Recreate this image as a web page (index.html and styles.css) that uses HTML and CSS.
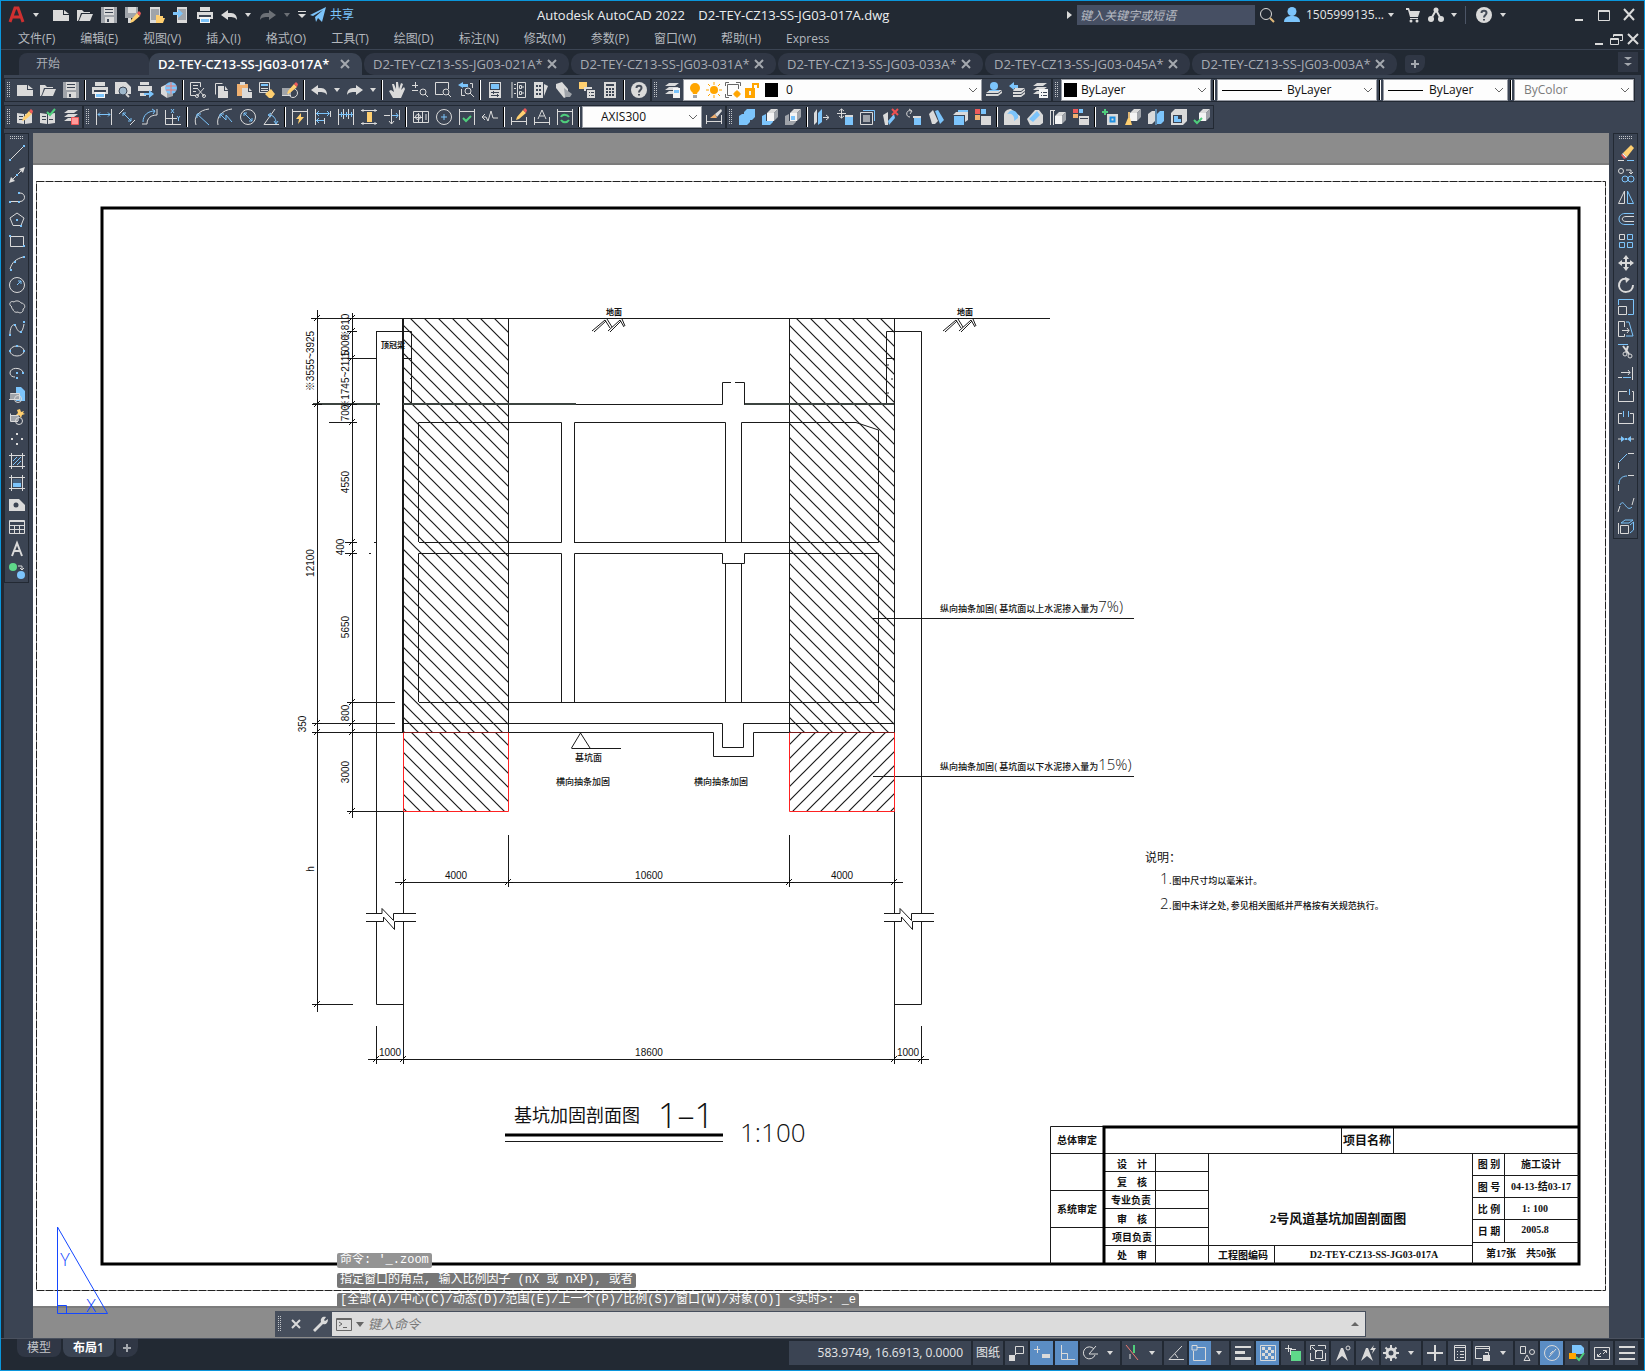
FILE: index.html
```html
<!DOCTYPE html>
<html lang="zh-CN">
<head>
<meta charset="utf-8">
<title>Autodesk AutoCAD 2022 - D2-TEY-CZ13-SS-JG03-017A.dwg</title>
<link rel="stylesheet" href="styles.css">
</head>
<body>
<svg class="sprite" aria-hidden="true">
  <symbol id="new"><path class="f" d="M0 3H10L10 8H16V14H0Z"/><path class="f" d="M11 3L16 7H11Z"/></symbol>
  <symbol id="open"><path class="f" d="M0 3H5L7 5H13V6H4L2 12L1 14H0Z"/><path class="f" d="M5 7H16L13 14H2Z"/></symbol>
  <symbol id="save"><path class="d" d="M0 0H16V16H0Z"/><path class="f" d="M3 0H13V8H3ZM4 10H13V16H4Z"/><path class="k" d="M4 2H12V3H4ZM4 5H12V6H4ZM6 12H8V15H6Z"/></symbol>
  <symbol id="print"><path class="f" d="M3 0H13V4H3ZM0 5H16V12H0Z"/><path class="k" d="M2 8H14V10H2Z"/><path class="w" d="M3 10H13V16H3Z"/><path class="bf" d="M4 12H12V15H4Z"/></symbol>
  <symbol id="undo"><path class="f" d="M0 8L7 3V6H10C14 6 16 9 16 13C14 10 12 10 7 10V13Z"/></symbol>
  <symbol id="redo"><path class="f" d="M16 8L9 3V6H6C2 6 0 9 0 13C2 10 4 10 9 10V13Z"/></symbol>
  <symbol id="caret"><path class="f" d="M5 6H11L8 10Z"/></symbol>
  <symbol id="help"><circle class="f" cx="8" cy="8" r="8"/><path class="q" d="M5.500 6C5.500 3 10.500 3 10.500 6C10.500 8 8 8 8 10.500M8 12V13.500"/></symbol>
  <symbol id="close"><path class="x" d="M4 4L12 12M12 4L4 12"/></symbol>
  <symbol id="chev"><path class="c" d="M4 6L8 10L12 6"/></symbol>
  <symbol id="pencil"><path class="y" d="M6 9L12 2L15 5L8 11L5 12Z"/><path class="rf" d="M12 2L14 0L16 2L15 5Z"/></symbol>
  <symbol id="layers"><path class="f" d="M5 1H15L11 4H1ZM5 5H15L11 8H1ZM5 9H10V12H1Z"/></symbol>
  <symbol id="cube"><path class="f" d="M5 4L9 0H16L12 4Z"/><path class="w" d="M5 4H12V12H5Z"/><path class="d" d="M12 4L16 0V8L12 12Z"/></symbol>
</svg>

<header>
  <div class="titlebar">
    <div class="quick">
      <button class="logo" aria-label="应用程序菜单"><svg class="ic big"><path class="logo-a" d="M3 17L8 3H11L16 17M6 12H13"/></svg></button>
      <button class="mini" aria-label="展开菜单"><svg class="ic"><use href="#caret"/></svg></button>
      <button aria-label="新建"><svg class="ic"><use href="#new"/></svg></button>
      <button aria-label="打开"><svg class="ic"><use href="#open"/></svg></button>
      <button aria-label="保存"><svg class="ic"><use href="#save"/></svg></button>
      <button aria-label="另存为"><svg class="ic"><path class="d" d="M0 0H13V11H0Z"/><path class="f" d="M3 0H11V6H3ZM3 11H6V16H3Z"/><use href="#pencil" y="4"/></svg></button>
      <button aria-label="从 Web 打开"><svg class="ic"><path class="f" d="M1 0H11V16H1Z"/><path class="d" d="M2 2H10V13H2Z"/><path class="y" d="M7 8H10L11 9H14V11H16L14 16H7Z"/></svg></button>
      <button aria-label="保存到 Web"><svg class="ic"><path class="f" d="M4 0H14V16H4Z"/><path class="d" d="M5 2H13V13H5Z"/><path class="bf" d="M0 5H5V2L10 6.500L5 11V8H0Z"/></svg></button>
      <button aria-label="打印"><svg class="ic"><use href="#print"/></svg></button>
      <button aria-label="放弃"><svg class="ic"><use href="#undo"/></svg></button>
      <button class="mini" aria-label="放弃列表"><svg class="ic"><use href="#caret"/></svg></button>
      <button class="off" aria-label="重做"><svg class="ic"><use href="#redo"/></svg></button>
      <button class="mini off" aria-label="重做列表"><svg class="ic"><use href="#caret"/></svg></button>
      <button class="mini" aria-label="自定义快速访问"><svg class="ic"><path d="M4 4.500H12"/><path class="f" d="M4 7H12L8 11Z"/></svg></button>
      <button class="share"><svg class="ic"><path class="bf" d="M0 8L16 0L12 15L8 11L6 15L5 10L13 3L3 9Z"/></svg>共享</button>
    </div>
    <h1>Autodesk AutoCAD 2022 <span>D2-TEY-CZ13-SS-JG03-017A.dwg</span></h1>
    <div class="account">
      <svg class="ic tri"><path class="f" d="M6 4L11 8L6 12Z"/></svg>
      <input type="text" aria-label="搜索" placeholder="键入关键字或短语">
      <button aria-label="搜索"><svg class="ic"><circle cx="7" cy="7" r="5.500"/><path class="ys" d="M11 11L15 15"/></svg></button>
      <button class="user"><svg class="ic"><circle class="bf" cx="8" cy="4.500" r="4.500"/><path class="bf" d="M0 15C0 10 4 9 8 9S16 10 16 15Z"/></svg>1505999135...</button>
      <button class="mini" aria-label="帐户"><svg class="ic"><use href="#caret"/></svg></button>
      <button class="cart" aria-label="商店"><svg class="ic"><path class="f" d="M1 1H4L5 4H15L13 10H5L3 3H1ZM5 11H13V12H5Z"/><circle class="f" cx="6" cy="14" r="1.500"/><circle class="f" cx="12" cy="14" r="1.500"/></svg></button>
      <button class="app" aria-label="Autodesk App"><svg class="ic"><path class="thick" d="M3 12L8 3L13 12"/><path d="M3 12H6M10 12H13"/><circle class="f" cx="8" cy="3" r="2.500"/><circle class="f" cx="3" cy="12" r="3"/><circle class="f" cx="13" cy="12" r="3"/></svg></button>
      <button class="mini" aria-label="App 列表"><svg class="ic"><use href="#caret"/></svg></button>
      <i class="bar"></i>
      <button class="helpb" aria-label="帮助"><svg class="ic"><use href="#help"/></svg></button>
      <button class="mini" aria-label="帮助列表"><svg class="ic"><use href="#caret"/></svg></button>
    </div>
    <div class="win">
      <button aria-label="最小化"><svg class="ic"><path class="f" d="M4 12H12V14H4Z"/></svg></button>
      <button aria-label="最大化"><svg class="ic"><path d="M2.500 3.500H13.500V13.500H2.500ZM2.500 4.500H13.500"/></svg></button>
      <button aria-label="关闭"><svg class="ic"><path class="thick" d="M3 2L13 13M13 2L3 13"/></svg></button>
    </div>
  </div>
  <div class="menurow">
    <nav class="menus" aria-label="菜单栏">
      <a href="#">文件(F)</a><a href="#">编辑(E)</a><a href="#">视图(V)</a><a href="#">插入(I)</a><a href="#">格式(O)</a><a href="#">工具(T)</a><a href="#">绘图(D)</a><a href="#">标注(N)</a><a href="#">修改(M)</a><a href="#">参数(P)</a><a href="#">窗口(W)</a><a href="#">帮助(H)</a><a href="#">Express</a>
    </nav>
    <div class="docwin">
      <button aria-label="最小化文档"><svg class="ic"><path class="f" d="M4 12H12V14H4Z"/></svg></button>
      <button aria-label="还原文档"><svg class="ic"><path d="M5.500 6V3.500H14.500V9.500H12M5.500 4.500H14.500M2.500 7.500H10.500V13.500H2.500ZM2.500 8.500H10.500"/></svg></button>
      <button aria-label="关闭文档"><svg class="ic"><path class="thick" d="M3 3L13 13M13 3L3 13"/></svg></button>
    </div>
  </div>
</header>

<nav class="filetabs" aria-label="文件选项卡">
  <a class="start" href="#">开始</a>
  <a class="on" href="#">D2-TEY-CZ13-SS-JG03-017A*<svg class="ic"><use href="#close"/></svg></a>
  <a href="#">D2-TEY-CZ13-SS-JG03-021A*<svg class="ic"><use href="#close"/></svg></a>
  <a href="#">D2-TEY-CZ13-SS-JG03-031A*<svg class="ic"><use href="#close"/></svg></a>
  <a href="#">D2-TEY-CZ13-SS-JG03-033A*<svg class="ic"><use href="#close"/></svg></a>
  <a href="#">D2-TEY-CZ13-SS-JG03-045A*<svg class="ic"><use href="#close"/></svg></a>
  <a href="#">D2-TEY-CZ13-SS-JG03-003A*<svg class="ic"><use href="#close"/></svg></a>
  <button class="plus" aria-label="新图形"><svg class="ic"><path class="x" d="M4 8H12M8 4V12"/></svg></button>
  <button class="more" aria-label="选项卡列表"><svg class="ic"><path class="x1" d="M4 3H12L8 6ZM4 9H12L8 12Z"/></svg></button>
</nav>

<div class="work">
  <div class="toolbars">
    <div class="row">
      <div class="box"><i class="grip"></i>
        <button aria-label="新建"><svg class="ic"><use href="#new"/></svg></button>
        <button aria-label="打开"><svg class="ic"><use href="#open"/></svg></button>
        <button aria-label="保存"><svg class="ic"><use href="#save"/></svg></button>
        <i class="sep"></i>
        <button aria-label="打印"><svg class="ic"><use href="#print"/></svg></button>
        <button aria-label="打印预览"><svg class="ic"><path class="f" d="M0 0H11L16 5V12H0Z"/><circle class="kb" cx="8" cy="9" r="4"/><path class="thick" d="M11 12L14 15"/></svg></button>
        <button aria-label="发布"><svg class="ic"><path class="f" d="M2 0H11V3H2ZM0 4H14V9H0ZM2 11H8V14H2Z"/><path class="bf" d="M6 11H11V8L16 12L11 16V13H6Z"/></svg></button>
        <button aria-label="三维打印"><svg class="ic"><path class="f" d="M0 5L6 2V16L0 12Z"/><path class="d" d="M6 6L12 11L12 14L6 16Z"/><circle class="bf" cx="10" cy="6" r="6"/><path class="rs" d="M5 4H15M5 8H15M10 0V12"/></svg></button>
        <i class="sep"></i>
        <button aria-label="剪切"><svg class="ic"><path d="M10.500 5V0.500H0.500V13.500H6M3 3.500H8M3 6.500H8M3 9.500H6M7 6L14 14M14 6L7 14"/><circle cx="7" cy="14" r="1.500"/><circle cx="14" cy="14" r="1.500"/></svg></button>
        <button aria-label="复制"><svg class="ic"><path d="M2.500 12.500V1.500H9.500"/><path class="f" d="M5 4H11V9H15V16H5ZM12 4L15 8H12Z"/></svg></button>
        <button aria-label="粘贴"><svg class="ic"><path class="o" d="M1 2H12V14H1Z"/><path class="f" d="M4 0H9V3H4ZM6 6H12V10H16V16H6ZM13 6L16 9H13Z"/></svg></button>
        <button aria-label="特性匹配"><svg class="ic"><path d="M0.500 0.500H10.500V10.500H0.500Z"/><path class="bf" d="M2 2H9V4H2Z"/><path d="M2 6.500H9M2 8.500H9"/><path class="y" d="M6 12L12 7L16 12L13 16H10Z"/></svg></button>
        <button aria-label="块编辑器"><svg class="ic"><path class="d" d="M0 6H9V13H0Z"/><circle cx="11" cy="11" r="4.500"/><path d="M0 13.500H9"/><use href="#pencil"/></svg></button>
        <i class="sep"></i>
        <button aria-label="放弃"><svg class="ic"><use href="#undo"/></svg></button>
        <button class="mini" aria-label="放弃列表"><svg class="ic"><use href="#caret"/></svg></button>
        <button aria-label="重做"><svg class="ic"><use href="#redo"/></svg></button>
        <button class="mini" aria-label="重做列表"><svg class="ic"><use href="#caret"/></svg></button>
        <i class="sep"></i>
        <button aria-label="实时平移"><svg class="ic"><path class="f" d="M4 16L0 9L2 8L5 10L3 2L5 2L7 7L7 0H9L10 7L12 1L14 2L12 8L15 5L16 7L12 16Z"/></svg></button>
        <button aria-label="实时缩放"><svg class="ic"><path d="M0 3.500H6M3.500 0V6M0 8.500H6"/><circle cx="11" cy="10" r="3"/><path d="M13 12L16 15"/></svg></button>
        <button aria-label="窗口缩放"><svg class="ic"><path d="M8 12.500H0.500V0.500H13.500V7"/><circle cx="11" cy="10" r="3"/><path d="M13 12L16 15"/></svg></button>
        <button aria-label="缩放上一个"><svg class="ic"><path class="bf" d="M0 3L5 0V2H10V5H5V6Z"/><path d="M12 1.500H14.500V6M3.500 7V13.500H7"/><circle cx="10" cy="9" r="3"/><path d="M12 11L16 15"/></svg></button>
        <i class="sep"></i>
        <button aria-label="特性"><svg class="ic"><path class="f" d="M2 0H14V16H2Z"/><path class="k" d="M3 1H13V8H3Z"/><path class="bf" d="M4 2H12V7H4Z"/><path class="ks" d="M4 10.500H12M4 13.500H12M6.500 9V12M10.500 12V15"/></svg></button>
        <button aria-label="设计中心"><svg class="ic"><path d="M2 0V16M4 2.500H6M4 6.500H6M4 11.500H6M7.500 0.500H15.500V15.500H7.500ZM9.500 3.500H11.500V6.500H9.500ZM13 4V6M9.500 9.500H11.500V12.500H9.500ZM13 10V12"/></svg></button>
        <button aria-label="工具选项板"><svg class="ic"><path class="f" d="M1 0H10V16H1Z"/><path class="k" d="M3 3H5V5H3ZM6 3H8V5H6ZM3 7H5V9H3ZM6 7H8V9H6ZM3 11H5V13H3ZM6 11H8V13H6Z"/><path class="f" d="M11 2L15 4L11 14Z"/></svg></button>
        <button aria-label="图纸集"><svg class="ic"><path class="f" d="M0 2L6 0L12 7V14L8 16L0 6Z"/><path class="d" d="M8 6L16 12L14 15L9 15Z"/></svg></button>
        <button aria-label="标记集"><svg class="ic"><path class="y" d="M0 0H8V7H0Z"/><path class="f" d="M5 5H13V7H7V9H5ZM8 8H16V16H8Z"/><path class="k" d="M10 10H11V11H10ZM12 10H15V11H12ZM10 13H11V14H10ZM12 13H15V14H12Z"/></svg></button>
        <button aria-label="计算器"><svg class="ic"><path class="f" d="M2 0H14V16H2Z"/><path class="k" d="M4 2H12V4H4ZM4 6H6V8H4ZM7 6H9V8H7ZM10 6H12V8H10ZM4 9H6V11H4ZM7 9H9V11H7ZM10 9H12V11H10ZM4 12H6V14H4ZM7 12H9V14H7ZM10 12H12V14H10Z"/></svg></button>
        <i class="sep"></i>
        <button aria-label="帮助"><svg class="ic"><use href="#help"/></svg></button>
      </div>
      <div class="box"><i class="grip"></i>
        <button aria-label="图层特性管理器"><svg class="ic"><use href="#layers"/><path class="w" d="M9 6H16V16H9Z"/><path class="bf" d="M10 8H15V11H10Z"/></svg></button>
        <div class="combo layer">
          <svg class="ic"><circle class="a" cx="8" cy="6" r="5"/><path class="a" d="M5 9H11L10 12H6Z"/><path class="d" d="M6 13H10V16H6Z"/></svg>
          <svg class="ic"><circle class="a" cx="8" cy="8" r="4"/><path class="as" d="M8 0V3M8 13V16M0 8H3M13 8H16M2 2L4 4M12 12L14 14M14 2L12 4M2 14L4 12"/></svg>
          <svg class="ic"><path class="c" d="M13.500 7V2.500H2.500V13.500H7M0.500 4V0.500H4M11 0.500H15.500V4M0.500 12V15.500H4"/><circle class="a" cx="12" cy="12" r="3"/><path class="as" d="M12 8V16M8 12H16"/></svg>
          <svg class="ic"><path class="a" d="M1 6H11V16H1Z"/><path class="lock" d="M9 6V2H14V6"/><path class="w" d="M5 9H7V13H5Z"/></svg>
          <i class="swatch"></i>
          <select aria-label="图层"><option>0</option></select><svg class="ic"><use href="#chev"/></svg>
        </div>
        <button aria-label="置为当前"><svg class="ic"><path class="f" d="M4 8H16L12 11H0ZM0 12H12L16 9V11L12 14H0Z"/><circle class="bf" cx="8" cy="4" r="4"/><path class="bf" d="M3 8H13V9H3Z"/></svg></button>
        <button aria-label="上一个图层"><svg class="ic"><path class="f" d="M6 6H16L12 9H4ZM4 10H12L16 7V9L12 12H4ZM4 13H12L16 10V12L12 15H4Z"/><path class="bf" d="M0 4L5 0V3H9V6H5V8Z"/></svg></button>
        <button aria-label="图层状态"><svg class="ic"><use href="#layers"/><path class="w" d="M7 7H16V16H7Z"/><path class="k" d="M9 10H10V11H9ZM11 10H15V11H11ZM9 13H10V14H9ZM11 13H15V14H11Z"/></svg></button>
      </div>
      <div class="box props"><i class="grip"></i>
        <div class="combo color"><i class="swatch"></i><select aria-label="颜色"><option>ByLayer</option></select><svg class="ic"><use href="#chev"/></svg></div>
        <i class="sep"></i>
        <div class="combo ltype"><i class="line"></i><select aria-label="线型"><option>ByLayer</option></select><svg class="ic"><use href="#chev"/></svg></div>
        <i class="sep"></i>
        <div class="combo lweight"><i class="line short"></i><select aria-label="线宽"><option>ByLayer</option></select><svg class="ic"><use href="#chev"/></svg></div>
        <i class="sep"></i>
        <div class="combo pstyle"><select aria-label="打印样式" disabled><option>ByColor</option></select><svg class="ic"><use href="#chev"/></svg></div>
      </div>
    </div>
    <div class="row">
      <div class="box"><i class="grip"></i>
        <button aria-label="块编辑"><svg class="ic"><path class="f" d="M0 4L7 5V15L0 14ZM8 5L15 4V14L8 15Z"/><path class="k" d="M2 7H6V8H2ZM2 10H6V11H2Z"/><use href="#pencil"/></svg></button>
        <button aria-label="块保存"><svg class="ic"><path class="f" d="M0 4L7 5V15L0 14ZM8 5L15 4V14L8 15Z"/><path class="k" d="M2 7H6V8H2ZM2 10H6V11H2ZM9 10H13V11H9Z"/><path class="gs" d="M7 3L10 6L15 0"/></svg></button>
        <button aria-label="图层删除"><svg class="ic"><use href="#layers"/><path class="pink" d="M8.500 8.500H15.500V15.500H8.500Z"/></svg></button>
      </div>
      <div class="box"><i class="grip"></i>
        <button aria-label="线性"><svg class="ic"><path d="M0.500 0V16M15.500 0V16"/><path class="b" d="M2 5.500H14M4 3.500L2 5.500L4 7.500M12 3.500L14 5.500L12 7.500"/></svg></button>
        <button aria-label="对齐"><svg class="ic"><path d="M0 5L5 0M11 16L16 11"/><path class="b" d="M4 4L12 12M4 7V4H7M12 9V12H9"/></svg></button>
        <button aria-label="弧长"><svg class="ic"><path d="M5 15C5 9 9 6 15 6M0 15H5M15 0V6"/><path class="b" d="M1 13C1 6 6 2 13 2M10 0L13 2L11 5"/></svg></button>
        <button aria-label="坐标"><svg class="ic"><path d="M0.500 1V15.500H16M0 9.500H12M7.500 5V16"/><path class="b" d="M6 0L9 4M9 0L6 4M12 7L13.500 9L15 7M13.500 9V12"/></svg></button>
        <i class="sep"></i>
        <button aria-label="半径"><svg class="ic"><path d="M2 16C-1 8 5 1 15 0"/><path class="b" d="M3 5L15 16M3 9V5H7"/></svg></button>
        <button aria-label="折弯"><svg class="ic"><path d="M1 16C-1 8 5 1 15 0"/><path class="b" d="M3 5L9 11L9 6L15 13M3 9V5H7"/></svg></button>
        <button aria-label="直径"><svg class="ic"><circle cx="8" cy="8" r="7.500"/><path class="b" d="M4 4L12 12M4 7V4H7M12 9V12H9"/></svg></button>
        <button aria-label="角度"><svg class="ic"><path d="M12 0L1 15.500H16"/><path class="b" d="M6 6C10 6 13 9 13 14M11 12L13 15L15 12M8 4L5 6L8 8"/></svg></button>
        <i class="sep"></i>
        <button aria-label="快速标注"><svg class="ic"><path d="M0.500 0V16M15.500 0V16M1 2.500H15"/><path class="y" d="M9 4L4 10H7L6 15L12 8H9Z"/></svg></button>
        <button aria-label="基线"><svg class="ic"><path d="M0.500 0V16M9.500 9V15M15.500 2V8"/><path class="b" d="M1 4.500H14M1 11.500H9M4 2L1.500 4.500L4 7M4 9L1.500 11.500L4 14M12 2L14.500 4.500L12 7"/></svg></button>
        <button aria-label="连续"><svg class="ic"><path d="M0.500 0V16M5.500 0V10M10.500 0V10M15.500 0V16"/><path class="b" d="M1 5.500H15M3.500 3V8M8.500 3V8M13.500 3V8"/></svg></button>
        <button aria-label="标注间距"><svg class="ic"><path d="M0 1.500H16M0 14.500H16M2 0V3M14 0V3M2 13V16M14 13V16"/><path class="y" d="M6 3H11V13H6Z"/></svg></button>
        <button aria-label="标注打断"><svg class="ic"><path d="M0 6.500H6M7.500 0V15M15.500 1V11M5 12L7.500 15L10 12"/><path class="b" d="M8 6.500H14M12 4L14 6.500L12 9"/></svg></button>
        <i class="sep"></i>
        <button aria-label="公差"><svg class="ic"><path d="M0.500 2.500H15.500V13.500H0.500ZM9.500 3V13M1 8.500H9M5.500 4V13M13 5V11"/><circle cx="5" cy="8" r="2.500"/></svg></button>
        <button aria-label="圆心标记"><svg class="ic"><circle cx="8" cy="8" r="7.500"/><path class="b" d="M5 8H11M8 5V11"/></svg></button>
        <button aria-label="检验"><svg class="ic"><path d="M0.500 0V16M15.500 0V16M1 2.500H15"/><path class="gs" d="M4 9L7 12L12 7"/></svg></button>
        <button aria-label="折弯线性"><svg class="ic"><path d="M0 8H4L6 12L9 2L11 9H16M3 5L0 8L3 11"/></svg></button>
        <i class="sep"></i>
        <button aria-label="编辑标注"><svg class="ic"><path d="M0.500 8V16M15.500 8V16M1 12.500H15"/><use href="#pencil" y="-1"/></svg></button>
        <button aria-label="编辑标注文字"><svg class="ic"><path d="M0.500 8V16M15.500 8V16M1 13.500H15M4 10L8 1L12 10M6 7H10"/></svg></button>
        <button aria-label="标注更新"><svg class="ic"><path d="M0.500 0V16M15.500 0V16M1 2.500H15"/><path class="gs" d="M4 8C5 5 10 5 12 8M12 11C10 14 6 14 4 11"/></svg></button>
        <i class="sep"></i>
        <div class="combo dimstyle"><select aria-label="标注样式"><option>AXIS300</option></select><svg class="ic"><use href="#chev"/></svg></div>
        <button aria-label="标注样式管理"><svg class="ic"><path d="M0.500 6V15M15.500 6V15M1 12.500H15"/><path class="o" d="M4 9L9 5L11 9Z"/><path class="f" d="M9 5L15 0L16 2L11 8Z"/></svg></button>
      </div>
      <div class="box"><i class="grip"></i>
        <button aria-label="并集"><svg class="ic"><path class="bf" d="M0 7L3 5H5V3L8 0H16V8L13 11H11V13L8 16H0Z"/></svg></button>
        <button aria-label="差集"><svg class="ic"><path class="bf" d="M0 7L4 5V12H11V13L8 16H0Z"/><use href="#cube"/></svg></button>
        <button aria-label="交集"><svg class="ic"><path class="d" d="M0 7L4 5V12H11V13L8 16H0Z"/><use href="#cube"/><path class="bf" d="M6 7H10V11H6Z"/></svg></button>
        <i class="sep"></i>
        <button aria-label="拉伸面"><svg class="ic"><path class="f" d="M0 4L3 0V13L0 16Z"/><path class="bf" d="M4 4L8 0V13L4 16Z"/><path d="M9 8.500H15M12 6L15 8.500L12 11"/></svg></button>
        <button aria-label="移动面"><svg class="ic"><path d="M0 4.500H9M4.500 0V9M2 2L4.500 0L7 2M2 7L4.500 9L7 7"/><path class="bf" d="M8 8H16V16H8Z"/><path class="f" d="M8 6H16V8H8Z"/></svg></button>
        <button aria-label="偏移面"><svg class="ic"><path d="M0.500 3.500H12.500V15.500H0.500Z"/><path class="d" d="M3 6H10V13H3Z"/><path class="b" d="M3 1.500H14.500V12"/></svg></button>
        <button aria-label="删除面"><svg class="ic"><path class="f" d="M0 6L5 3V16H2Z"/><path class="bf" d="M5 12L11 5L12 9L6 16Z"/><path class="rs2" d="M9 0L15 6M15 0L9 6"/></svg></button>
        <button aria-label="旋转面"><svg class="ic"><path d="M5 2C0 0 -1 8 4 8M3 0L6 2L4 5"/><path class="bf" d="M8 9H15V16H8Z"/><path class="f" d="M7 7H15V9H7Z"/></svg></button>
        <button aria-label="倾斜面"><svg class="ic"><path class="f" d="M0 5L4 1L9 12L6 15H3Z"/><path class="bf" d="M6 2L9 1L15 11L11 15Z"/></svg></button>
        <button aria-label="复制面"><svg class="ic"><path class="bf" d="M2 7H12V16H2Z"/><path class="f" d="M4 3H16V11L13 13V6H1Z"/><path class="bf" d="M6 1H16V3H6Z"/></svg></button>
        <button aria-label="着色面"><svg class="ic"><path class="rf" d="M0 0H5V5H0Z"/><path class="bf" d="M6 0H11V5H6Z"/><path class="o" d="M0 6H5V11H0Z"/><path class="f" d="M6 7H16V16H6Z"/></svg></button>
        <i class="sep"></i>
        <button aria-label="圆角边"><svg class="ic"><path class="f" d="M0 6C0 2 4 0 7 0L16 7V16H0Z"/><path class="bf" d="M6 2C11 0 15 5 14 9L10 12C11 7 8 4 3 5Z"/></svg></button>
        <button aria-label="倒角边"><svg class="ic"><path class="f" d="M0 10L8 1H12L16 6V14L13 16H3Z"/><path class="bf" d="M2 10L10 2L13 6L6 13Z"/></svg></button>
        <button aria-label="压印边"><svg class="ic"><path d="M0.500 1V16M3.500 1V16M0 1.500H5"/><use href="#cube" y="3"/></svg></button>
        <button aria-label="着色边"><svg class="ic"><path class="rf" d="M0 0H5V4H0Z"/><path class="bf" d="M6 0H10V4H6Z"/><path class="o" d="M0 5H5V9H0Z"/><path class="f" d="M6 7H16V16H6Z"/><path class="k" d="M7 9H15V10H7Z"/></svg></button>
        <i class="sep"></i>
        <button aria-label="压印"><svg class="ic"><path class="gs" d="M0 3H6M3 0V6"/><path class="f" d="M5 5H16V16H5Z"/><path class="bb" d="M8.500 8.500H12.500V12.500H8.500Z"/></svg></button>
        <button aria-label="清除"><svg class="ic"><use href="#cube"/><path class="y" d="M3 9H5L7 16H0Z"/><path class="ys" d="M4 3V9"/></svg></button>
        <button aria-label="分割"><svg class="ic"><path class="f" d="M0 5L4 2H7V12L4 15H0Z"/><path class="bf" d="M9 5L12 2H16V12L13 15H9Z"/><path class="b" d="M8 0V16"/></svg></button>
        <button aria-label="抽壳"><svg class="ic"><path class="f" d="M0 4L4 0H16V12L12 16H0Z"/><path class="k" d="M2 6H11V14H2Z"/><path class="bf" d="M3 7H7V10H10V13H3Z"/></svg></button>
        <button aria-label="检查"><svg class="ic"><use href="#cube"/><path class="gs" d="M0 11L3 14L8 9"/></svg></button>
      </div>
    </div>
  </div>

  <main>
    <aside class="side left"><div class="vbox"><i class="hgrip"></i>
      <button aria-label="直线"><svg class="ic"><path d="M2 14L14 2"/><path class="bf" d="M0 14H2V16H0ZM14 0H16V2H14Z"/></svg></button>
      <button aria-label="构造线"><svg class="ic"><path d="M4 12L12 4"/><path class="f" d="M16 0L10 2L14 6ZM0 16L2 10L6 14Z"/><path class="bf" d="M7 7H9V9H7Z"/></svg></button>
      <button aria-label="多段线"><svg class="ic"><path d="M2 12.500H9M11 4C17 4 17 12.500 11 12.500"/><path class="bf" d="M0 12H2V14H0ZM9 12H11V14H9ZM9 3H11V5H9Z"/></svg></button>
      <button aria-label="多边形"><svg class="ic"><path d="M8 2L15 7L12 14.500H4L1 7Z"/><path class="bf" d="M7 8H9V10H7ZM11 14H13V16H11Z"/></svg></button>
      <button aria-label="矩形"><svg class="ic"><path d="M1.500 3.500H14.500V13.500H1.500Z"/><path class="bf" d="M0 2H2V4H0ZM14 12H16V14H14Z"/></svg></button>
      <button aria-label="圆弧"><svg class="ic"><path d="M1 14C3 7 7 4 14 2"/><path class="bf" d="M1 14H3V16H1ZM5 6H7V8H5ZM14 1H16V3H14Z"/></svg></button>
      <button aria-label="圆"><svg class="ic"><circle cx="8" cy="8" r="7.500"/><path class="b" d="M8 8L12 4M9 4H12V7"/></svg></button>
      <button aria-label="修订云线"><svg class="ic"><path d="M3 8C-1 6 1 1 5 3C7 1 11 2 12 4C16 4 17 9 14 10C15 13 11 15 9 13C6 14 4 12 4 10C3 10 2 9 3 8Z"/></svg></button>
      <button aria-label="样条曲线"><svg class="ic"><path d="M1 13C1 5 5 1 7 6S13 15 15 3"/><path class="bf" d="M0 13H2V15H0ZM5 3H7V5H5ZM11 10H13V12H11ZM14 0H16V2H14Z"/></svg></button>
      <button aria-label="椭圆"><svg class="ic"><ellipse cx="8" cy="8" rx="7" ry="5"/><path class="bf" d="M0 7H2V9H0ZM14 7H16V9H14ZM7 2H9V4H7Z"/></svg></button>
      <button aria-label="椭圆弧"><svg class="ic"><path d="M14 7C12 2 1 2 1 8C1 11 4 12 6 12"/><path class="bf" d="M7 7H9V9H7ZM13 7H15V9H13ZM7 12H9V14H7Z"/></svg></button>
      <button aria-label="插入块"><svg class="ic"><path class="bf" d="M7 0H12L16 4V14H7Z"/><path class="d" d="M1 6H10V12H1Z"/><path d="M1.500 6.500H10.500V12.500H0"/><circle cx="9" cy="12" r="3.500"/></svg></button>
      <button aria-label="创建块"><svg class="ic"><path class="d" d="M1 6H10V12H1Z"/><path d="M1.500 4.500V12.500H9M1 6.500H9"/><circle cx="10" cy="12" r="3.500"/><path class="y" d="M11 0L12 3L15 2L14 4L16 5L13 6L12 9L10 6L7 6L9 4L8 1Z"/></svg></button>
      <button aria-label="点"><svg class="ic"><path class="f" d="M7 2H9V4H7ZM2 7H4V9H2ZM12 7H14V9H12ZM7 12H9V14H7Z"/></svg></button>
      <button aria-label="图案填充"><svg class="ic"><path d="M0 2.500H16M0 13.500H16M2.500 0V16M13.500 0V16"/><path class="b" d="M4 8L8 4M4 12L12 4M8 12L12 8"/></svg></button>
      <button aria-label="渐变色"><svg class="ic"><path d="M0 2.500H16M0 13.500H16M2.500 0V16M13.500 0V16"/><path class="b2" d="M4 4H12V8H4Z"/><path class="bf" d="M4 8H12V12H4Z"/></svg></button>
      <button aria-label="面域"><svg class="ic"><path class="f" d="M0 2H10L16 8V14H0Z"/><circle class="k" cx="7" cy="8" r="2.500"/></svg></button>
      <button aria-label="表格"><svg class="ic"><path d="M0.500 1.500H15.500V14.500H0.500ZM0 2.500H16M0 6.500H16M0 10.500H16M5.500 6V15M10.500 6V15"/></svg></button>
      <button aria-label="多行文字"><svg class="ic"><path class="thick" d="M3 15L8 2L13 15M5 10H11"/></svg></button>
      <button aria-label="添加选定对象"><svg class="ic"><circle class="gf" cx="4" cy="4" r="4"/><circle class="bf" cx="12" cy="12" r="4"/><path d="M9 3H13V7M11 5L13 7L15 5"/></svg></button>
    </div></aside>

    <section class="canvas">
      <svg class="drawing" viewBox="33 133 1576 1205" role="img" aria-label="基坑加固剖面图">
        <defs>
          <pattern id="h1" patternUnits="userSpaceOnUse" x="403" y="325" width="14" height="14"><path d="M-1 -1L15 15M13 -1L15 1M-1 13L1 15"/></pattern>
          <pattern id="h2" patternUnits="userSpaceOnUse" x="789" y="325" width="14" height="14"><path d="M-1 -1L15 15M13 -1L15 1M-1 13L1 15"/></pattern>
          <pattern id="h3" patternUnits="userSpaceOnUse" x="403" y="738" width="14" height="14"><path d="M-1 -1L15 15M13 -1L15 1M-1 13L1 15"/></pattern>
          <pattern id="h4" patternUnits="userSpaceOnUse" x="789" y="745" width="14" height="14"><path d="M-1 15L15 -1M-1 1L1 -1M13 15L15 13"/></pattern>
          <path id="tick" d="M-3 3L3 -3M-5 0.500H5M0.500 -5V5" class="tickmark"/>
          <g id="ground"><path d="M592 331L605 320L610 328M594 332L606 321M608 331L620 320L624 327M610 332L621 321M607 319L612 327M622 319L625 326"/></g>
          <g id="break"><path class="wipe" d="M366 914H416V922H366Z"/><path d="M366 913.500H382V908.500L393.500 920.500V913.500H416M366 921.500H383.500V917L394.500 929.500V921.500H416"/></g>
        </defs>
        <path class="paper" d="M33 165H1609V1306H33Z"/>
        <path class="shade" d="M33 164H1609M33 1307H1609"/>
        <path class="margin" d="M36.500 181.500H1605.500V1290.500H36.500Z"/>
        <path class="frame" d="M102 208H1579V1264H102Z"/>

        <path fill="url(#h1)" d="M403 318H509V732H403Z"/>
        <path fill="url(#h2)" d="M789 318H895V732H789Z"/>
        <path fill="url(#h3)" d="M403 733H509V811H403Z"/>
        <path fill="url(#h4)" d="M789 733H895V811H789Z"/>

        <g class="ln">
          <path d="M311 318.500H1050M376.500 331.500H411.500V404M357 358.500H376M403 358.500H411M376.500 331V1004.500H403M403.500 318V1063M402.500 318V732M508.500 318V732"/>
          <path d="M789.500 318V732M894.500 318V1063M886.500 404V331.500H921.500V1004.500H894M886 358.500H894"/>
          <path class="mid" d="M313 404H380M403 404H576M744 404H894"/>
          <path d="M576 404.500H722.500V382.500H731M735 382.500H744.500V404.500"/>
          <path d="M329 422.500H353M418.500 542V422.500H561.500V542.500H419M574.500 542.500V422.500H725.500V542M741.500 542V422.500H856L878.500 430V542.500H574"/>
          <path d="M418.500 702V553.500H561.500V702M574.500 702V553.500H722.500V563.500H744.500V553.500H878.500V702.500M725.500 564V702M741.500 564V702M348 702.500H395M419 702.500H879"/>
          <path d="M313 723.500H395M403 723.500H722.500V747.500H743.500V723.500H894M313 732.500H713.500V756.500H753.500V732.500H894"/>
          <path d="M571.500 748.500H621M571.500 748L580.500 733L590 748"/>
          <path d="M317.500 310V1012M352.500 314V818M348 811.500H411M313 1004.500H353M345 542.500H353M345 553.500H353"/>
          <path d="M395 882.500H903M508.500 835V886M789.500 835V886M368 1059.500H929M376.500 1026V1063M921.500 1026V1063"/>
          <path d="M873 618.500H1134M873 776.500H1134"/>
          <path d="M374 542.500H376M369 553.500H371M410 378.500H411M888 364V366M892 378V380M888 392V394"/>
        </g>
        <path class="red" d="M403.500 732.500V811.500H508.500V732.500M789.500 732.500V811.500H894.500V732.500"/>
        <path class="maroon" d="M403 732.500H508M789 732.500H894"/>
        <g>
          <use href="#tick" x="317" y="318"/><use href="#tick" x="317" y="404"/><use href="#tick" x="317" y="723"/><use href="#tick" x="317" y="732"/><use href="#tick" x="317" y="1004"/>
          <use href="#tick" x="352" y="318"/><use href="#tick" x="352" y="331"/><use href="#tick" x="352" y="358"/><use href="#tick" x="352" y="404"/><use href="#tick" x="352" y="422"/><use href="#tick" x="352" y="542"/><use href="#tick" x="352" y="553"/><use href="#tick" x="352" y="702"/><use href="#tick" x="352" y="723"/><use href="#tick" x="352" y="732"/><use href="#tick" x="352" y="811"/>
          <use href="#tick" x="403" y="882"/><use href="#tick" x="508" y="882"/><use href="#tick" x="789" y="882"/><use href="#tick" x="894" y="882"/>
          <use href="#tick" x="376" y="1059"/><use href="#tick" x="403" y="1059"/><use href="#tick" x="894" y="1059"/><use href="#tick" x="921" y="1059"/>
        </g>
        <g class="ln"><use href="#ground"/><use href="#ground" x="351"/><use href="#break"/><use href="#break" x="518"/></g>

        <g class="dims">
          <text x="456" y="879">4000</text><text x="649" y="879">10600</text><text x="842" y="879">4000</text>
          <text x="390" y="1056">1000</text><text x="649" y="1056">18600</text><text x="908" y="1056">1000</text>
          <text transform="translate(314 361) rotate(-90)">※3555~3925</text>
          <text transform="translate(314 563) rotate(-90)">12100</text>
          <text transform="translate(314 869) rotate(-90)">h</text>
          <text transform="translate(306 724) rotate(-90)">350</text>
          <text transform="translate(349 327) rotate(-90)">※810</text>
          <text transform="translate(349 346) rotate(-90)">1000</text>
          <text transform="translate(349 380) rotate(-90)">※1745~2115</text>
          <text transform="translate(349 413) rotate(-90)">700</text>
          <text transform="translate(349 482) rotate(-90)">4550</text>
          <text transform="translate(344 547) rotate(-90)">400</text>
          <text transform="translate(349 627) rotate(-90)">5650</text>
          <text transform="translate(349 713) rotate(-90)">800</text>
          <text transform="translate(349 772) rotate(-90)">3000</text>
        </g>
        <g class="note">
          <text class="tiny" x="606" y="315">地面</text><text class="tiny" x="957" y="315">地面</text><text class="tiny" x="381" y="348">顶冠梁</text>
          <text x="575" y="761">基坑面</text><text x="556" y="785">横向抽条加固</text><text x="694" y="785">横向抽条加固</text>
          <text x="940" y="612">纵向抽条加固( 基坑面以上水泥掺入量为<tspan class="num">7%)</tspan></text>
          <text x="940" y="770">纵向抽条加固( 基坑面以下水泥掺入量为<tspan class="num">15%)</tspan></text>
          <text class="head" x="1145" y="862">说明：</text>
          <text x="1160" y="884"><tspan class="num">1.</tspan>图中尺寸均以毫米计。</text>
          <text x="1160" y="909"><tspan class="num">2.</tspan>图中未详之处, 参见相关图纸并严格按有关规范执行。</text>
        </g>
        <text class="title" x="514" y="1122">基坑加固剖面图</text>
        <text class="scale" x="658" y="1128">1–1</text>
        <text class="scale small" x="740" y="1142">1:100</text>
        <path class="frame" d="M505 1135H723"/><path class="ln" d="M505 1141.500H723"/>

        <g class="ln">
          <path d="M1103 1126.500H1050.500V1264M1050 1153.500H1579M1050 1190.500H1103M1050 1227.500H1103M1155.500 1153V1264M1208.500 1153V1264M1103 1171.500H1208M1103 1190.500H1208M1103 1208.500H1208M1103 1227.500H1208M1103 1245.500H1473M1274.500 1245V1264M1341.500 1127V1153M1393.500 1127V1153M1472.500 1153V1264M1504.500 1153V1242M1473 1175.500H1579M1473 1197.500H1579M1473 1219.500H1579M1473 1242.500H1579"/>
        </g>
        <path class="frame" d="M1104 1264V1127H1579"/>
        <g class="block">
          <text x="1077" y="1144">总体审定</text><text x="1077" y="1213">系统审定</text>
          <text x="1132" y="1168">设　计</text><text x="1132" y="1186">复　核</text><text x="1131" y="1204">专业负责</text><text x="1132" y="1223">审　核</text><text x="1132" y="1241">项目负责</text><text x="1132" y="1259">处　审</text>
          <text class="mid-t" x="1367" y="1145">项目名称</text><text class="big-t" x="1338" y="1223">2号风道基坑加固剖面图</text>
          <text x="1243" y="1259">工程图编码</text><text x="1374" y="1258">D2-TEY-CZ13-SS-JG03-017A</text>
          <text x="1489" y="1168">图 别</text><text x="1489" y="1191">图 号</text><text x="1489" y="1213">比 例</text><text x="1489" y="1235">日 期</text>
          <text x="1541" y="1168">施工设计</text><text x="1541" y="1190">04-13-结03-17</text><text x="1535" y="1212">1: 100</text><text x="1535" y="1233">2005.8</text><text x="1521" y="1257">第17张　共50张</text>
        </g>
        <g class="ucs"><path d="M57.500 1227V1313.500H107.500ZM57.500 1305.500H66.500V1313"/><text x="65" y="1266">Y</text><text x="91" y="1312">X</text></g>
      </svg>

      <div class="command">
        <ol class="history">
          <li>命令: '_.zoom</li>
          <li>指定窗口的角点, 输入比例因子 (nX 或 nXP), 或者</li>
          <li>[全部(A)/中心(C)/动态(D)/范围(E)/上一个(P)/比例(S)/窗口(W)/对象(O)] &lt;实时&gt;: _e</li>
        </ol>
        <div class="cmdbar">
          <i class="grip"></i>
          <button aria-label="关闭命令行"><svg class="ic"><path class="thick" d="M4 4L12 12M12 4L4 12"/></svg></button>
          <button aria-label="自定义"><svg class="ic"><path class="f" d="M1 14L9 6C8 2 11 0 14 1L12 4L13 5L16 3C16 7 14 9 11 8L3 16Z"/></svg></button>
          <div class="cmdin">
            <svg class="ic dark"><path d="M0.500 2.500H15.500V14.500H0.500ZM0 3.500H16M3 6L6 8L3 10M7 11.500H11"/></svg>
            <svg class="ic dark"><path class="g" d="M4 6H12L8 11Z"/></svg>
            <input type="text" aria-label="命令" placeholder="键入命令">
            <svg class="ic dark"><path class="g" d="M4 10H12L8 6Z"/></svg>
          </div>
        </div>
      </div>
    </section>

    <aside class="side right"><div class="vbox"><i class="hgrip"></i>
      <button aria-label="删除"><svg class="ic"><path class="y" d="M5 8L13 0L16 3L9 12Z"/><path class="w" d="M4 9L5 8L9 12L8 13Z"/><path class="rf" d="M3 10L4 9L8 13L6 14Z"/><path d="M0 15.500H6"/><path class="b" d="M9 15.500H16"/></svg></button>
      <button aria-label="复制"><svg class="ic"><circle cx="3" cy="4" r="2.500"/><path d="M8 3H13V7M11 5L13 7L15 5"/><circle class="b" cx="7" cy="12" r="3"/><circle class="b" cx="13" cy="12" r="3"/></svg></button>
      <button aria-label="镜像"><svg class="ic"><path d="M6.500 2V14.500H0.500Z"/><path class="b" d="M9.500 2V14.500H15.500Z"/></svg></button>
      <button aria-label="偏移"><svg class="ic"><path class="b" d="M16 2.500H7C-1 2.500 -1 13.500 7 13.500H16"/><path d="M16 5.500H8C3 5.500 3 10.500 8 10.500H16"/></svg></button>
      <button aria-label="阵列"><svg class="ic"><path d="M1.500 1.500H6.500V6.500H1.500Z"/><path class="b" d="M9.500 1.500H14.500V6.500H9.500ZM1.500 9.500H6.500V14.500H1.500ZM9.500 9.500H14.500V14.500H9.500Z"/></svg></button>
      <button aria-label="移动"><svg class="ic"><path class="thick" d="M2 8H14M8 2V14"/><path class="f" d="M8 0L11 4H5ZM8 16L11 12H5ZM0 8L4 5V11ZM16 8L12 5V11Z"/></svg></button>
      <button aria-label="旋转"><svg class="ic"><path class="thick" d="M9 2C3 1 1 5 1 9C2 17 15 17 15 8"/><path class="f" d="M7 0L12 2L8 6Z"/></svg></button>
      <button aria-label="缩放"><svg class="ic"><path class="b" d="M0.500 6V0.500H15.500V15.500H10"/><path d="M0.500 7.500H8.500V15.500H0.500Z"/></svg></button>
      <button aria-label="拉伸"><svg class="ic"><path d="M6.500 6V0.500H0.500V15.500H6.500V13M4 9.500H11M9 7L11 9.500L9 12"/><path class="b" d="M8 1H11L15 15H8"/></svg></button>
      <button aria-label="修剪"><svg class="ic"><path class="b" d="M0 1.500H10"/><path class="thick" d="M5 3L11 11M10 3L8 9"/><circle cx="7" cy="11" r="2"/><circle cx="12" cy="13" r="2"/></svg></button>
      <button aria-label="延伸"><svg class="ic"><path d="M3 7.500H12M10 5L12 7.500L10 10M0 12.500H4M14.500 2V15"/><path class="b" d="M5 12.500H13"/></svg></button>
      <button aria-label="打断于点"><svg class="ic"><path d="M9 4.500H0.500V14.500H15.500V4.500H14"/><path class="b" d="M11.500 2V8"/></svg></button>
      <button aria-label="打断"><svg class="ic"><path d="M4 4.500H0.500V14.500H15.500V4.500H12"/><path class="b" d="M5.500 2V8M10.500 2V8"/></svg></button>
      <button aria-label="合并"><svg class="ic"><path d="M0 8H3M13 8H16"/><path class="bf" d="M3 5L7 8L3 11ZM13 5L9 8L13 11ZM7 7H9V9H7Z"/></svg></button>
      <button aria-label="倒角"><svg class="ic"><path d="M0.500 16V10M10 0.500H16"/><path class="b" d="M1 9L9 1"/></svg></button>
      <button aria-label="圆角"><svg class="ic"><path d="M0.500 16V10M10 0.500H16"/><path class="b" d="M1 9C1 4 4 1 9 1"/></svg></button>
      <button aria-label="光顺曲线"><svg class="ic"><path d="M0 15L2 9M14 8L16 1"/><path class="b" d="M2 8C6 0 8 16 14 10"/></svg></button>
      <button aria-label="分解"><svg class="ic"><path d="M2.500 6.500H10.500V14.500H2.500ZM0.500 4V15"/><path class="b" d="M3 4L7 1H15L11 4ZM12 6L15.500 3V11L12 14"/></svg></button>
    </div></aside>
  </main>
</div>

<footer>
  <nav class="layouts" aria-label="布局">
    <a href="#">模型</a><a class="on" href="#">布局1</a><button aria-label="新建布局"><svg class="ic"><path class="x" d="M4 8H12M8 4V12"/></svg></button>
  </nav>
  <div class="status">
    <output>583.9749, 16.6913, 0.0000</output>
    <button class="space">图纸</button>
    <button aria-label="捕捉"><svg class="ic"><path class="f" d="M0 10H6V16H0Z"/><path d="M6.500 10V1.500H14.500V8.500H7"/></svg></button>
    <button class="act" aria-label="动态输入"><svg class="ic"><path d="M0 4.500H6M3.500 1V8"/><path class="f" d="M8 9H16V13H8Z"/></svg></button>
    <button class="act" aria-label="正交"><svg class="ic"><path d="M2.500 0V14.500H16M3 8.500H8.500V14"/></svg></button>
    <button class="wide" aria-label="极轴"><svg class="ic"><path d="M12 4A6 6 0 1 0 13 10M7 9H16M7 9L14 1"/></svg><svg class="ic"><use href="#caret"/></svg></button>
    <button class="wide" aria-label="等轴测"><svg class="ic"><path class="gs" d="M10 8V0"/><path class="rs" d="M2 0L14 15"/><path d="M6 9V14"/></svg><svg class="ic"><use href="#caret"/></svg></button>
    <button aria-label="对象捕捉追踪"><svg class="ic"><path d="M14 1L1 14.500H16M7 9L10 13"/></svg></button>
    <button class="wide actl" aria-label="对象捕捉"><svg class="ic"><path d="M6 2.500H14.500V15.500H2.500V6M1 0.500H6V5H1Z"/></svg><svg class="ic"><use href="#caret"/></svg></button>
    <button aria-label="线宽"><svg class="ic"><path class="f" d="M0 1H16V3H0ZM0 6H10V9H0ZM0 12H16V15H0Z"/></svg></button>
    <button class="act" aria-label="透明度"><svg class="ic"><path d="M0.500 0.500H15.500V15.500H0.500Z"/><path class="f" d="M2 2H5V5H2ZM8 2H11V5H8ZM5 5H8V8H5ZM11 5H14V8H11ZM2 8H5V11H2ZM8 8H11V11H8ZM5 11H8V14H5ZM11 11H14V14H11Z"/></svg></button>
    <button aria-label="选择循环"><svg class="ic"><path d="M0 3.500H7M3.500 0V7"/><path class="gf" d="M6 6H16V16H6Z"/><path class="f" d="M5 4H11V5H6V10H5Z"/></svg></button>
    <button aria-label="三维对象捕捉"><svg class="ic"><path d="M5.500 5.500H12.500V13.500H5.500ZM0.500 5V0.500H5M8 0.500H15.500V4M0.500 8V15.500H4M15.500 8V15.500H11M2 2L7 7"/></svg></button>
    <button aria-label="注释可见性"><svg class="ic"><path class="f" d="M6 3H8L13 16L7 11L1 16Z"/><circle cx="13" cy="3" r="2"/></svg></button>
    <button aria-label="自动缩放"><svg class="ic"><path class="f" d="M6 3H8L13 16L7 11L1 16ZM14 0L10 5H13L12 9L16 3H13Z"/></svg></button>
    <button class="wide" aria-label="切换工作空间"><svg class="ic"><circle class="gear" cx="8" cy="8" r="4"/><path class="thick" d="M8 0V3M8 13V16M0 8H3M13 8H16M2.500 2.500L4.500 4.500M11.500 11.500L13.500 13.500M13.500 2.500L11.500 4.500M2.500 13.500L4.500 11.500"/></svg><svg class="ic"><use href="#caret"/></svg></button>
    <button aria-label="注释监视器"><svg class="ic"><path class="thick" d="M0 8H16M8 0V16"/></svg></button>
    <button aria-label="快捷特性"><svg class="ic"><path d="M2.500 0.500H13.500V15.500H2.500ZM2 2.500H14M5 6.500H6M8 6.500H12M5 9.500H6M8 9.500H12M5 12.500H6M8 12.500H12"/></svg></button>
    <button class="wide" aria-label="锁定用户界面"><svg class="ic"><path d="M7 13.500H0.500V1.500H14.500V6M1 3.500H14M13.500 10V7.500H10"/><path class="f" d="M8 10H15V16H8Z"/></svg><svg class="ic"><use href="#caret"/></svg></button>
    <button aria-label="隔离对象"><svg class="ic"><path d="M1.500 1.500H6.500V8.500H1.500ZM5 15.500L8 10L11 15.500Z"/><circle cx="13" cy="7" r="2.500"/></svg></button>
    <button class="act" aria-label="硬件加速"><svg class="ic"><circle cx="8" cy="8" r="7.500"/><path d="M5 12L12 4M6 9L9 6"/></svg></button>
    <button aria-label="图形状态"><svg class="ic"><path class="bf" d="M3 0H12L15 3V9H3Z"/><path class="a" d="M0 8H7V14H0Z"/><path class="gs" d="M7 12L10 15L15 8"/></svg></button>
    <button aria-label="全屏显示"><svg class="ic"><path d="M0.500 2.500H15.500V14.500H0.500ZM9 5.500H12.500V8M12 6L9 9M7 11.500H3.500V9M4 11L7 8"/></svg></button>
    <button aria-label="自定义"><svg class="ic"><path class="f" d="M0 1H16V3H0ZM0 7H16V9H0ZM0 13H16V15H0Z"/></svg></button>
  </div>
</footer>
</body>
</html>
```
FILE: styles.css
```css
* { box-sizing: border-box; }
:root {
  --dark: #222933;
  --panel: #3b4453;
  --light: #dadada;
  --blue: #7cc4fb;
  --accent: #0a96dc;
}
body {
  margin: 0;
  min-height: 100vh;
  display: flex;
  flex-direction: column;
  border: 1px solid var(--accent);
  background: var(--dark);
  color: #c3c6ca;
  font: 12px/16px "Open Sans", "Noto Sans CJK SC", sans-serif;
  overflow-x: hidden;
}
button, input, select { font: inherit; color: inherit; margin: 0; padding: 0; border: 0; background: none; }
button { display: flex; align-items: center; justify-content: center; }
a { color: inherit; text-decoration: none; white-space: nowrap; }
.sprite { position: absolute; width: 0; height: 0; }

/* icons */
.ic { width: 16px; height: 16px; flex: none; fill: none; stroke: var(--light); overflow: visible; }
.ic.big { width: 20px; height: 20px; }
.f { fill: var(--light); stroke: none; }
.w { fill: #f4f4f4; stroke: none; }
.d { fill: #a0a4aa; stroke: none; }
.k { fill: var(--panel); stroke: none; }
.ks { stroke: var(--panel); }
.kb { fill: #9fb8cc; stroke: var(--panel); }
.bf { fill: var(--blue); stroke: none; }
.b { stroke: var(--blue); }
.bb { stroke: #1f8fe0; stroke-width: 2; }
.b2 { fill: #46607c; stroke: none; }
.y { fill: #ffcf70; stroke: none; }
.ys { stroke: #e0b878; stroke-width: 2; }
.o { fill: #f0b070; stroke: none; }
.a { fill: #ffa500; stroke: none; }
.as { stroke: #ffa500; }
.lock { stroke: #ffa500; stroke-width: 2; }
.rf { fill: #ee5a5a; stroke: none; }
.rs { stroke: #ee7a70; }
.rs2 { stroke: #ee5050; stroke-width: 2; }
.pink { fill: #ff9a9a; stroke: #ee5a5a; }
.gf { fill: #5fd88a; stroke: none; }
.gs { stroke: #4fce7c; stroke-width: 2; }
.g { fill: #666; stroke: none; }
.c { stroke: #666; }
.q { stroke: #444b57; stroke-width: 2; }
.x { stroke: #a4a8ae; stroke-width: 2; }
.x1 { fill: #a4a8ae; stroke: none; }
.thick { stroke-width: 2; }
.gear { stroke-width: 3; }
.logo-a { stroke: #cf3030; stroke-width: 3; }
.ic.dark { stroke: #666; }

/* title and menus */
.titlebar { display: flex; align-items: center; justify-content: space-between; height: 28px; padding: 0 3px 0 4px; }
.quick, .account, .win, .docwin, .menus { display: flex; align-items: center; }
.quick { flex: none; width: 356px; }
.quick button { width: 24px; height: 24px; }
.quick .mini, .account .mini { width: 14px; }
.quick .mini + button { margin-left: 1px; }
.quick .logo + .mini { margin-right: 5px; }
.quick .share { width: auto; gap: 4px; margin-left: 3px; color: var(--blue); }
.off { opacity: .4; }
h1 { margin: 0; font-size: 13px; font-weight: 400; color: #eceef0; white-space: pre; flex: 1; padding-left: 176px; }
h1 span { margin-left: 10px; }
.account input { width: 178px; height: 20px; padding: 0 3px; background: #464f63; }
.account input::placeholder { color: #b8bcc4; font-style: italic; opacity: 1; }
.account button { width: 25px; height: 24px; color: #e4e6e8; }
.account .user { width: auto; gap: 6px; padding-left: 4px; }
.account .cart { margin-left: 2px; }
.account .app { width: 22px; }
.account .helpb { margin-left: 5px; }
.bar { width: 1px; height: 18px; margin-left: 4px; background: #4c5566; }
.win { margin-left: 56px; }
.win button { width: 25px; height: 24px; }
.menurow { display: flex; justify-content: space-between; height: 20px; padding: 0 3px 0 17px; }
.menus { gap: 25px; color: #b4b8be; }
.docwin button { width: 17px; height: 20px; }

/* drawing file tabs */
.filetabs { display: flex; align-items: flex-end; height: 26px; padding-left: 18px; border-top: 1px solid var(--panel); }
.filetabs a { display: flex; align-items: center; justify-content: space-between; width: 205px; height: 22px; margin-right: 2px; padding: 0 9px; border-radius: 10px; background: #303745; color: #a8acb4; font-size: 13px; overflow: hidden; }
.filetabs .start { width: 130px; padding-left: 17px; margin-right: 0; border-radius: 8px 8px 0 0; font-size: 12px; }
.filetabs .on { width: 213px; background: var(--panel); color: #fff; font-weight: 600; border-radius: 10px 10px 0 0; }
.filetabs .plus { width: 20px; height: 18px; margin: 0 0 2px 6px; background: #303745; border-radius: 4px 4px 10px 4px; }
.filetabs .more { width: 20px; height: 20px; margin: 0 6px 3px auto; background: #303745; }

/* toolbars */
.work { flex: 1; display: flex; flex-direction: column; border: solid var(--dark); border-width: 0 3px; background: var(--panel); }
.toolbars { display: flex; flex-direction: column; gap: 3px; padding: 3px 0 4px; }
.row { display: flex; height: 24px; }
.box { display: flex; align-items: center; border: 1px solid var(--dark); min-width: 0; }
.box button { width: 23px; height: 22px; flex: none; }
.box .mini { width: 13px; }
.grip, .hgrip { flex: none; background: conic-gradient(at 1px 1px, transparent 75%, #c4c7cb 0) 0 0 / 2px 2px; }
.grip { width: 4px; height: 16px; margin: 0 2px; }
.hgrip { width: 14px; height: 4px; margin: 2px 0; }
.sep { width: 6px; height: 20px; flex: none; background: linear-gradient(90deg, transparent 2px, #000 2px 3px, #fff 3px 4px, transparent 4px); }
.combo { display: flex; align-items: center; height: 22px; padding: 0 0 0 4px; background: #fdfdfd; color: #111; border: 1px solid #9a9ea6; min-width: 0; }
.combo select { flex: 1; min-width: 0; height: 20px; appearance: none; opacity: 1; }
.layer { width: 299px; gap: 3px; padding-left: 3px; }
.layer .swatch { margin: 0 5px 0 2px; }
.color { width: 150px; padding-left: 2px; gap: 4px; }
.ltype { width: 160px; gap: 5px; }
.lweight { width: 125px; gap: 6px; }
.pstyle { width: 120px; padding-left: 9px; color: #7b7b7b; }
.dimstyle { width: 120px; padding-left: 18px; }
.swatch { width: 13px; height: 14px; flex: none; background: #000; }
.line { width: 60px; height: 1px; flex: none; background: #000; }
.line.short { width: 35px; }

/* workspace */
main { display: flex; flex: 1; }
.side { flex: none; }
.side.left { width: 29px; padding-right: 4px; }
.side.right { width: 32px; padding: 0 3px 0 4px; }
.vbox { border: 1px solid var(--dark); display: flex; flex-direction: column; align-items: center; }
.vbox button { width: 23px; height: 22px; }
.canvas { position: relative; flex: 1; min-width: 0; background: #8c8c8c; }

/* model drawing */
.drawing { display: block; width: 100%; height: auto; fill: none; stroke-width: 1; }
.drawing text { fill: #111; stroke: none; }
.drawing .paper { fill: #fff; }
.shade { stroke: #7c7c7c; stroke-width: 2; }
.margin { stroke: #222; stroke-dasharray: 8 1; }
.frame { stroke: #000; stroke-width: 3; }
.ln { stroke: #1a1a1a; }
pattern path { stroke: #1a1a1a; stroke-width: 1.2; }
.mid { stroke: #3c4440; stroke-width: 2; }
.wipe { fill: #fff; stroke: none; }
.tickmark { stroke: #111; }
.red { stroke: #f22; }
.maroon { stroke: #7a1a1a; }
.dims { font: 10px "Liberation Sans", "Noto Sans CJK SC", sans-serif; text-anchor: middle; }
.note { font: 500 9px "Noto Sans CJK SC", sans-serif; }
.note .tiny { font-size: 8px; font-weight: 700; }
.note .head { font-size: 12px; font-weight: 400; }
.note .num { font: 300 15px "Open Sans", sans-serif; }
.title { font: 18px "Noto Sans CJK SC", sans-serif; }
.scale { font: 300 34px "Open Sans", sans-serif; }
.scale.small { font-size: 26px; }
.block { font: 700 10px "Liberation Serif", "Noto Sans CJK SC", serif; text-anchor: middle; }
.block .mid-t { font-size: 12px; }
.block .big-t { font-size: 13px; }
.ucs { stroke: #1447ff; }
.drawing .ucs text { fill: #1447ff; font: 300 18px "Open Sans", sans-serif; text-anchor: middle; }

/* command line */
.command { position: absolute; left: 242px; right: 243px; bottom: 1px; }
.history { margin: 0 0 3px 62px; padding: 0; list-style: none; display: flex; flex-direction: column; align-items: flex-start; gap: 5px; color: #fff; font: 12px/15px "Liberation Mono", "Noto Sans CJK SC", monospace; }
.history li { height: 15px; padding: 0 3px; border-radius: 2px; background: #767676; white-space: pre; }
.history li:first-child { background: #949494; }
.cmdbar { display: flex; align-items: center; height: 26px; background: #464e5c; border: 1px solid #464e5c; }
.cmdbar button { width: 24px; height: 24px; }
.cmdin { display: flex; align-items: center; flex: 1; height: 24px; padding: 0 2px 0 4px; background: #dcdcdc; }
.cmdin input { flex: 1; min-width: 0; font-size: 13px; }
.cmdin input::placeholder { color: #777; font-style: italic; opacity: 1; }

/* status bar */
footer { display: flex; justify-content: space-between; height: 32px; padding: 0 6px 0 16px; border-top: 1px solid #4a515e; }
.layouts { display: flex; gap: 2px; height: 18px; }
.layouts a { padding: 0 10px; background: #303745; border-radius: 0 0 8px 8px; line-height: 18px; }
.layouts .on { background: var(--panel); color: #fff; font-weight: 600; }
.layouts button { width: 22px; background: #303745; border-radius: 0 0 10px 4px; }
.status { display: flex; gap: 2px; height: 24px; margin-top: 2px; color: #e4e6e8; }
.status output { width: 182px; padding: 4px 8px 0 0; text-align: right; background: var(--panel); white-space: nowrap; }
.status button { width: 23px; background: var(--panel); }
.status .space { width: 30px; }
.status .wide { width: 40px; gap: 4px; }
.status .act { background: #5b8dc4; }
.status .actl { background: linear-gradient(90deg, #5b8dc4 22px, var(--panel) 22px); }
```
